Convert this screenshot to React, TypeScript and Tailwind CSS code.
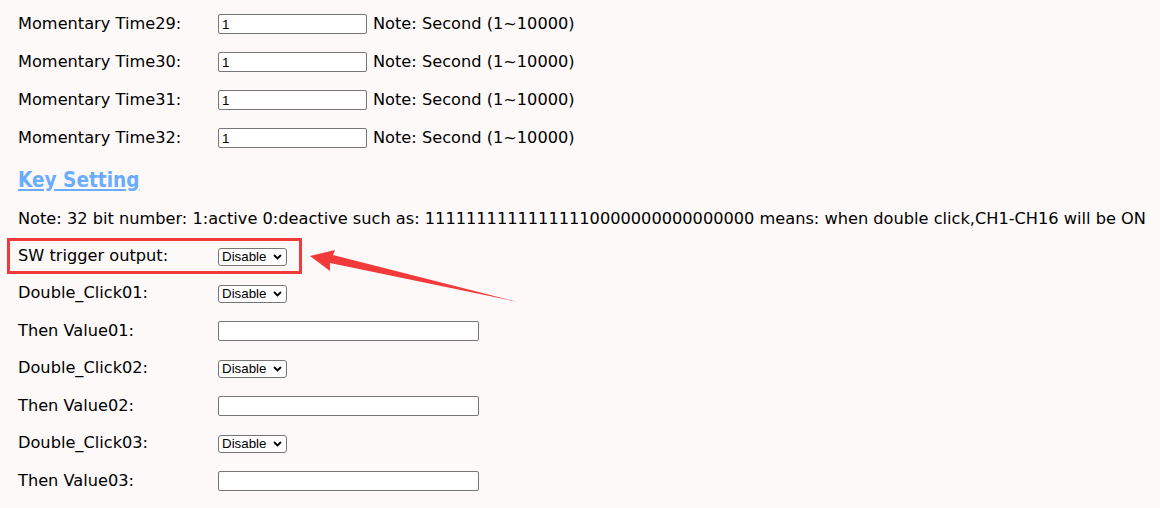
import React from "react";

const momentary = [29, 30, 31, 32];

const keyRows: { label: string; kind: "select" | "input" }[] = [
  { label: "Double_Click01:", kind: "select" },
  { label: "Then Value01:", kind: "input" },
  { label: "Double_Click02:", kind: "select" },
  { label: "Then Value02:", kind: "input" },
  { label: "Double_Click03:", kind: "select" },
  { label: "Then Value03:", kind: "input" },
];

function Select() {
  return (
    <div className="relative w-[69px] h-[18px]">
      <select
        defaultValue="Disable"
        className="block appearance-none w-full h-full bg-white border border-[#767676] rounded-[3px] pl-[3px] py-0 text-[13.33px] leading-[16px] text-black font-['Liberation_Sans',Arial,sans-serif] outline-none"
      >
        <option>Disable</option>
        <option>Enable</option>
      </select>
      <svg
        className="absolute right-[5px] top-[6px] pointer-events-none"
        width="9"
        height="6"
        viewBox="0 0 9 6"
      >
        <path d="M1 1 L4.5 4.5 L8 1" fill="none" stroke="#000" strokeWidth="1.8" />
      </svg>
    </div>
  );
}

function TextBox({ width, value }: { width: string; value?: string }) {
  return (
    <input
      defaultValue={value}
      className={`block ${width} h-[20px] bg-white border border-[#767676] rounded-[2px] px-[3px] text-[13.33px] text-black font-['Liberation_Sans',Arial,sans-serif] outline-none`}
    />
  );
}

export default function App() {
  return (
    <div className="relative w-[1160px] h-[508px] overflow-hidden bg-[#fdf9f8] text-black text-[16.2px] font-['DejaVu_Sans',Verdana,sans-serif] pl-[18px] pt-[5px]">
      {momentary.map((n) => (
        <div key={n} className="flex items-center h-[38px]">
          <span className="w-[200px] shrink-0">Momentary Time{n}:</span>
          <TextBox width="w-[149px]" value="1" />
          <span className="ml-[6px]">Note: Second (1~10000)</span>
        </div>
      ))}

      <div className="flex items-center h-[43px] pt-[3px]">
        <a
          href="#"
          className="text-[20.6px] font-bold text-[#6aacff] underline underline-offset-2 font-['DejaVu_Sans_Condensed','DejaVu_Sans',sans-serif]"
        >
          Key Setting
        </a>
      </div>

      <div className="flex items-center h-[38px] whitespace-nowrap">
        Note: 32 bit number: 1:active 0:deactive such as: 11111111111111110000000000000000 means: when double click,CH1-CH16 will be ON
      </div>

      <div className="flex items-center h-[37px]">
        <span className="w-[200px] shrink-0">SW trigger output:</span>
        <Select />
      </div>

      {keyRows.map((r) => (
        <div key={r.label} className={`flex items-center ${r.kind === "select" ? "h-[37px]" : "h-[38px]"}`}>
          <span className="w-[200px] shrink-0">{r.label}</span>
          {r.kind === "select" ? <Select /> : <TextBox width="w-[261px]" />}
        </div>
      ))}

      {/* annotation: red box + arrow */}
      <div className="absolute left-[7px] top-[238px] w-[295px] h-[36px] border-[3px] border-[#f23a3a] pointer-events-none" />
      <svg className="absolute left-0 top-0 pointer-events-none" width="1160" height="508">
        <polygon
          points="310,256 335,250 333,255 518,302 330,263 330,271"
          fill="#f23a3a"
        />
      </svg>
    </div>
  );
}
